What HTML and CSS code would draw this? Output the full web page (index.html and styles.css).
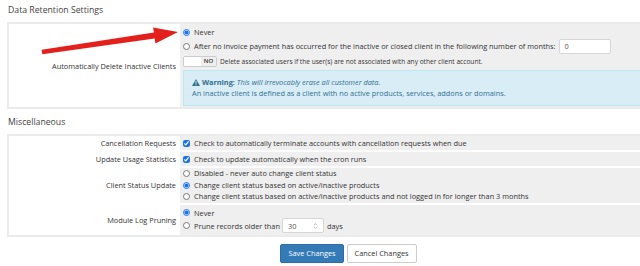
FILE: index.html
```html
<!DOCTYPE html>
<html lang="en">
<head>
    <meta charset="UTF-8">
    <title>Other Settings</title>
    <link rel="stylesheet" href="styles.css">
</head>
<body>
    <div class="page">
        <h2 class="section-title">Data Retention Settings</h2>
        <div class="form-table">
            <div class="row">
                <div class="label">Automatically Delete Inactive Clients</div>
                <div class="field retention">
                    <label class="opt"><input type="radio" name="del" checked> Never</label>
                    <label class="opt opt-input"><input type="radio" name="del"> After no invoice payment has occurred for the inactive or closed client in the following number of months: <span class="text-box months">0</span></label>
                    <div class="opt switch-line">
                        <span class="switch"><span class="switch-on"></span><span class="switch-off">NO</span></span>
                        <span class="small">Delete associated users if the user(s) are not associated with any other client account.</span>
                    </div>
                    <div class="alert">
                        <div>
                            <svg class="warn-icon" viewBox="0 0 16 14" width="8" height="7"><path d="M8 0 L16 14 L0 14 Z" fill="#31708f"/><rect x="7" y="4" width="2" height="5.5" fill="#d9edf7"/><rect x="7" y="10.8" width="2" height="1.8" fill="#d9edf7"/></svg>
                            <strong>Warning:</strong> <em>This will irrevocably erase all customer data.</em>
                        </div>
                        <div>An inactive client is defined as a client with no active products, services, addons or domains.</div>
                    </div>
                </div>
            </div>
        </div>

        <h2 class="section-title">Miscellaneous</h2>
        <div class="form-table">
            <div class="row">
                <div class="label">Cancellation Requests</div>
                <div class="field">
                    <label class="opt"><input type="checkbox" checked> Check to automatically terminate accounts with cancellation requests when due</label>
                </div>
            </div>
            <div class="row">
                <div class="label">Update Usage Statistics</div>
                <div class="field">
                    <label class="opt"><input type="checkbox" checked> Check to update automatically when the cron runs</label>
                </div>
            </div>
            <div class="row">
                <div class="label">Client Status Update</div>
                <div class="field tight">
                    <label class="opt"><input type="radio" name="status"> Disabled - never auto change client status</label>
                    <label class="opt"><input type="radio" name="status" checked> Change client status based on active/inactive products</label>
                    <label class="opt"><input type="radio" name="status"> Change client status based on active/inactive products and not logged in for longer than 3 months</label>
                </div>
            </div>
            <div class="row">
                <div class="label">Module Log Pruning</div>
                <div class="field pruning">
                    <label class="opt"><input type="radio" name="prune" checked> Never</label>
                    <label class="opt opt-input"><input type="radio" name="prune"> Prune records older than <span class="text-box days-box">30<svg class="spin" viewBox="0 0 6 10" width="5" height="8"><path d="M1 4 L3 2 L5 4 M1 6 L3 8 L5 6" fill="none" stroke="#999" stroke-width="0.8"/></svg></span> days</label>
                </div>
            </div>
        </div>

        <div class="actions">
            <button class="btn btn-primary">Save Changes</button>
            <button class="btn">Cancel Changes</button>
        </div>
    </div>

    <svg class="arrow" width="200" height="70" viewBox="0 0 200 70">
        <polygon points="41.7,49.8 153.9,32.5 153.1,27.6 178,32 155.4,43.4 154.7,38.5 42.3,54.2" fill="#e3201b"/>
    </svg>
</body>
</html>
```

FILE: styles.css
```css
* {
    margin: 0;
    padding: 0;
    box-sizing: border-box;
}

body {
    font-family: 'Open Sans', sans-serif;
    font-size: 7.35px;
    color: #333;
    background: white;
    overflow: hidden;
    position: relative;
}

.page {
    width: 690px;
    padding: 4px 0 0 7px;
}

.section-title {
    font-size: 8.7px;
    font-weight: 400;
    line-height: 12px;
    color: #444;
    margin: 0 0 6px 1px;
}

.form-table + .section-title {
    margin-top: 7px;
}

.form-table {
    border: 2px solid #ebebeb;
    display: flex;
    flex-direction: column;
    gap: 2px;
    background: white;
}

.row {
    display: grid;
    grid-template-columns: 169px 1fr;
    column-gap: 2px;
}

.label {
    display: flex;
    align-items: center;
    justify-content: flex-end;
    padding-right: 2px;
    text-align: right;
}

.field {
    background: #efefef;
    padding: 1px 3px;
}

.field.tight {
    padding: 0 3px;
}

.field.tight .opt {
    line-height: 11.5px;
}

.field.pruning {
    padding: 2px 3px 2px;
}

.field.retention {
    padding: 2px 0 1px 3px;
}

.opt {
    display: flex;
    align-items: center;
    line-height: 12px;
    white-space: nowrap;
}

.opt input {
    width: 7px;
    height: 7px;
    margin: 0 4px 0 0;
    accent-color: #1a73e8;
    flex-shrink: 0;
}

.opt-input {
    height: 16px;
}

.pruning .opt-input {
    height: 14px;
}

.text-box {
    display: inline-flex;
    align-items: center;
    background: white;
    border: 1px solid #d6d6d6;
    border-radius: 2px;
    height: 15px;
    padding-left: 5px;
    color: #555;
}

.months {
    width: 52px;
    margin-left: 3px;
}

.days-box {
    width: 42px;
    height: 15px;
    margin: 0 3px 0 2px;
    position: relative;
}

.spin {
    position: absolute;
    right: 5px;
    top: 3px;
}

.switch-line {
    margin-top: 2px;
    height: 11px;
}

.switch {
    display: inline-flex;
    height: 11px;
    border: 1px solid #ccc;
    border-radius: 2px;
    margin-right: 3px;
    overflow: hidden;
}

.switch-on {
    width: 17px;
    background: white;
}

.switch-off {
    width: 15px;
    background: #eee;
    font-size: 6px;
    font-weight: 600;
    line-height: 9px;
    text-align: center;
    color: #333;
}

.small {
    font-size: 6.6px;
}

.alert {
    margin-top: 3px;
    background: #d9edf7;
    border: 1px solid #bce8f1;
    border-right: none;
    color: #31708f;
    padding: 6px 8px 6px;
    line-height: 11px;
}

.warn-icon {
    vertical-align: -0.5px;
}

.alert strong {
    font-weight: 700;
}

.actions {
    display: flex;
    justify-content: center;
    gap: 3px;
    margin-top: 7px;
}

.btn {
    font-family: 'Open Sans', sans-serif;
    font-size: 7.35px;
    height: 19px;
    padding: 0 7px;
    border: 1px solid #ccc;
    border-radius: 2px;
    background: white;
    color: #333;
}

.btn-primary {
    background: #337ab7;
    border-color: #2e6da4;
    color: white;
}

.arrow {
    position: absolute;
    left: 0;
    top: 0;
}
```
